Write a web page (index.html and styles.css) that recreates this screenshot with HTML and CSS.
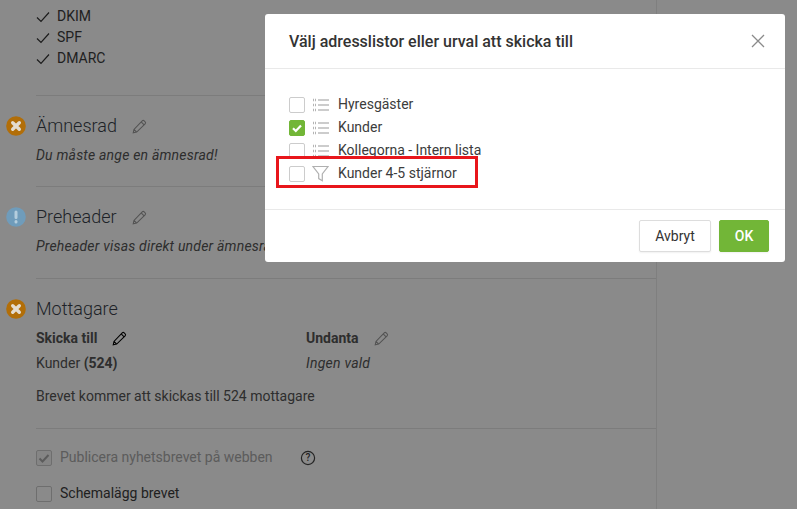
FILE: index.html
```html
<!DOCTYPE html>
<html lang="sv">
<head>
<meta charset="utf-8">
<title>Välj adresslistor</title>
<link rel="stylesheet" href="styles.css">
</head>
<body>
<svg class="defs" width="0" height="0" aria-hidden="true">
  <symbol id="pencil" viewBox="0 0 16 16"><path d="M1.3 14.700l.8-3.600L10.900 2a1.500 1.500 0 0 1 2.100 0l1 1a1.500 1.500 0 0 1 0 2.100L5 13.900zM2.100 11.100l2.900 2.800M9.800 3.100l3.100 3.100" fill="none" stroke="currentColor" stroke-width="1.150"/></symbol>
  <symbol id="cross" viewBox="0 0 20 20"><circle cx="10" cy="10" r="9.800" fill="#b26e08"/><path d="M6.700 6.700l6.600 6.600M13.300 6.700l-6.600 6.600" stroke="#e4dccf" stroke-width="3.400" stroke-linecap="round"/></symbol>
  <symbol id="list" viewBox="0 0 16 14"><path d="M0 2h3M0 7h3M0 12h3" stroke="#b4b4b4" stroke-width="2.400" stroke-dasharray="1 1"/><path d="M5 2h11M5 7h11M5 12h11" stroke="#bcbcbc" stroke-width="1.300"/></symbol>
</svg>

<main class="main">
  <ul class="checks">
    <li><svg class="tick" viewBox="0 0 14 12"><path d="M1 6.500l4 4L13 1.500" fill="none" stroke="#333" stroke-width="1.200"/></svg>DKIM</li>
    <li><svg class="tick" viewBox="0 0 14 12"><path d="M1 6.500l4 4L13 1.500" fill="none" stroke="#333" stroke-width="1.200"/></svg>SPF</li>
    <li><svg class="tick" viewBox="0 0 14 12"><path d="M1 6.500l4 4L13 1.500" fill="none" stroke="#333" stroke-width="1.200"/></svg>DMARC</li>
  </ul>

  <section class="sec sec-subject">
    <div class="sec-head">
      <svg class="status"><use href="#cross"/></svg>
      <h2>Ämnesrad</h2>
      <svg class="pen"><use href="#pencil"/></svg>
    </div>
    <p class="note">Du måste ange en ämnesrad!</p>
  </section>

  <section class="sec sec-pre">
    <div class="sec-head">
      <svg class="status" viewBox="0 0 20 20"><circle cx="10" cy="10" r="9.800" fill="#6f9cbb"/><path d="M10 5v5.500M10 14.500v.5" stroke="#b4cddd" stroke-width="3" stroke-linecap="round"/></svg>
      <h2>Preheader</h2>
      <svg class="pen"><use href="#pencil"/></svg>
    </div>
    <p class="note">Preheader visas direkt under ämnesraden i de flesta e-postprogram</p>
  </section>

  <section class="sec sec-recipients">
    <div class="sec-head">
      <svg class="status"><use href="#cross"/></svg>
      <h2>Mottagare</h2>
    </div>
    <div class="cols">
      <div class="col">
        <div class="col-title"><strong>Skicka till</strong><svg class="pen pen-dark"><use href="#pencil"/></svg></div>
        <div class="col-value">Kunder <strong>(524)</strong></div>
      </div>
      <div class="col">
        <div class="col-title"><strong>Undanta</strong><svg class="pen"><use href="#pencil"/></svg></div>
        <div class="col-value"><em class="note-inline">Ingen vald</em></div>
      </div>
    </div>
    <p class="summary">Brevet kommer att skickas till 524 mottagare</p>
  </section>

  <section class="options">
    <div class="opt opt-disabled">
      <span class="box box-disabled"><svg viewBox="0 0 14 14"><path d="M2.500 7.500l3 3 6-6.500" fill="none" stroke="#aaa" stroke-width="2"/></svg></span>
      <span>Publicera nyhetsbrevet på webben</span>
      <svg class="help" viewBox="0 0 16 16"><circle cx="8" cy="8" r="6.600" fill="none" stroke="#444" stroke-width="1.200"/><text x="8" y="11.300" text-anchor="middle" class="help-q">?</text></svg>
    </div>
    <div class="opt opt-plain">
      <span class="box"></span>
      <span>Schemalägg brevet</span>
    </div>
  </section>
</main>

<div class="overlay"></div>

<div class="modal">
  <header class="modal-head">
    <h3>Välj adresslistor eller urval att skicka till</h3>
    <svg class="close" viewBox="0 0 14 14"><path d="M1 1l12 12M13 1L1 13" stroke="#8a8a8a" stroke-width="1.300" fill="none"/></svg>
  </header>
  <div class="modal-body">
    <div class="row"><span class="box"></span><svg class="row-icon"><use href="#list"/></svg><span>Hyresgäster</span></div>
    <div class="row"><span class="box box-on"><svg viewBox="0 0 14 14"><path d="M3 7.300l2.800 2.700L11 4.500" fill="none" stroke="#fff" stroke-width="2.200"/></svg></span><svg class="row-icon"><use href="#list"/></svg><span>Kunder</span></div>
    <div class="row"><span class="box"></span><svg class="row-icon"><use href="#list"/></svg><span>Kollegorna - Intern lista</span></div>
    <div class="row"><span class="box"></span><svg class="row-icon row-filter" viewBox="0 0 17 17"><path d="M1 1.500h15L10.300 9v6.800L6.700 13.600V9z" fill="none" stroke="#b0b0b0" stroke-width="1.200"/></svg><span>Kunder 4-5 stjärnor</span></div>
    <div class="highlight"></div>
  </div>
  <footer class="modal-foot">
    <button class="btn" type="button">Avbryt</button>
    <button class="btn btn-ok" type="button">OK</button>
  </footer>
</div>
</body>
</html>
```

FILE: styles.css
```css
* { box-sizing: border-box; }
html, body { margin: 0; height: 100%; }
body {
  position: relative;
  width: 797px;
  height: 509px;
  overflow: hidden;
  background: #fff;
  font: 14px/21px Roboto, sans-serif;
  color: #555;
}
.defs { position: absolute; }
.main {
  width: 657px;
  height: 509px;
  padding: 6px 0 0 36px;
  border-right: 1px solid #eaeaea;
  overflow: hidden;
}
.checks { list-style: none; margin: 0; padding: 0 0 26px; border-bottom: 1px solid #e6e6e6; color: #3c3c3c; }
.checks li { display: flex; align-items: center; height: 21px; gap: 7px; }
.tick { width: 14px; height: 12px; }
.sec { border-bottom: 1px solid #e6e6e6; }
.sec-subject { height: 91px; padding-top: 18px; }
.sec-pre { height: 92px; padding-top: 18px; }
.sec-recipients { height: 150px; padding-top: 18px; }
.sec-head { position: relative; display: flex; align-items: center; height: 24px; }
.sec-head h2 { margin: 0; font-size: 18px; font-weight: 300; line-height: 24px; color: #3a3f4a; }
.status { position: absolute; left: -30px; top: 2px; z-index: 2; width: 20px; height: 20px; }
.pen { width: 15px; height: 15px; color: #999; margin-left: 15px; }
.pen-dark { color: #000; }
.note { margin: 7px 0 0; font-style: italic; letter-spacing: .2px; white-space: nowrap; }
.note-inline { letter-spacing: .25px; }
.cols { display: flex; margin-top: 7px; }
.col { width: 270px; }
.col-title { display: flex; align-items: center; height: 21px; }
.col-value { margin-top: 4px; }
.summary { margin: 12px 0 0; }
.options { padding-top: 18px; }
.opt { display: flex; align-items: center; gap: 8px; height: 21px; margin-bottom: 15px; }
.opt-disabled { color: #aaa; }
.opt-plain { color: #3c3c3c; }
.help { width: 16px; height: 16px; margin-left: 19px; }
.help-q { font: 500 10px Roboto, sans-serif; fill: #444; }
.box {
  flex: none;
  display: block;
  width: 16px;
  height: 16px;
  background: #fff;
  border: 1px solid #ccc;
  border-radius: 2px;
}
.box svg { display: block; width: 14px; height: 14px; }
.box-disabled { background: #f5f5f5; }
.box-on { background: #72b637; border-color: #72b637; }
.overlay { position: absolute; inset: 0; z-index: 1; background: rgba(0, 0, 0, .46); }
.modal {
  position: absolute;
  left: 265px;
  top: 14px;
  z-index: 3;
  width: 520px;
  height: 248px;
  background: #fff;
  border-radius: 3px;
  display: flex;
  flex-direction: column;
}
.modal-head {
  height: 55px;
  padding: 0 20px 0 24px;
  display: flex;
  align-items: center;
  justify-content: space-between;
  border-bottom: 1px solid #e9e9e9;
}
.modal-head h3 { margin: 0; font-size: 16px; font-weight: 500; color: #333; }
.close { width: 14px; height: 14px; }
.modal-body { position: relative; flex: 1; padding: 24px 24px 0; color: #3c3c3c; }
.row { display: flex; align-items: center; height: 23px; }
.row .box { margin-right: 8px; }
.row-icon { width: 16px; height: 14px; margin-right: 9px; }
.row-icon.row-filter { width: 17px; height: 17px; margin-left: -1px; }
.highlight {
  position: absolute;
  left: 11px;
  top: 87px;
  width: 202px;
  height: 32px;
  border: 3px solid #e8161b;
}
.modal-foot {
  height: 53px;
  padding: 10px 16px 0 0;
  display: flex;
  justify-content: flex-end;
  gap: 8px;
  border-top: 1px solid #e9e9e9;
}
.btn {
  width: 72px;
  height: 32px;
  padding: 0;
  font: 14px Roboto, sans-serif;
  color: #333;
  background: #fff;
  border: 1px solid #ddd;
  border-radius: 2px;
  box-shadow: 0 1px 2px rgba(0, 0, 0, .06);
}
.btn-ok { width: 50px; background: #72b637; border-color: #72b637; color: #fff; font-weight: 500; }
```
